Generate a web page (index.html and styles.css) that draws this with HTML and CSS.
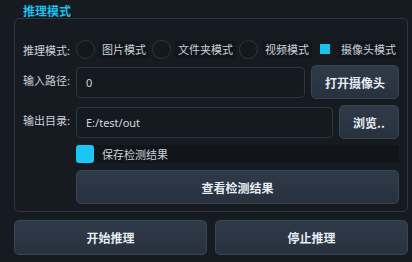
FILE: index.html
```html
<!DOCTYPE html>
<html>
<head>
    <meta charset="utf-8">
    <meta name="viewport" content="width=device-width, initial-scale=1">
    <link rel="stylesheet" href="styles.css">
    <title>推理模式</title>
</head>
<body>
<div class="panel">
    <div class="group-title">推理模式</div>
    <div class="group">
        <div class="row mode-row">
            <span class="label">推理模式:</span>
            <div class="radios">
                <span class="radio"><i class="dot"></i><span class="rtext">图片模式</span></span>
                <span class="radio"><i class="dot"></i><span class="rtext">文件夹模式</span></span>
                <span class="radio"><i class="dot"></i><span class="rtext">视频模式</span></span>
                <span class="radio checked"><i class="dot"></i><span class="rtext">摄像头模式</span></span>
            </div>
        </div>
        <div class="row">
            <span class="label">输入路径:</span>
            <div class="field">0</div>
            <button class="btn cam">打开摄像头</button>
        </div>
        <div class="row">
            <span class="label">输出目录:</span>
            <div class="field">E:/test/out</div>
            <button class="btn browse">浏览..</button>
        </div>
        <div class="row check-row">
            <span class="check"></span>
            <span class="check-text">保存检测结果</span>
        </div>
        <div class="row wide-row">
            <button class="btn wide">查看检测结果</button>
        </div>
    </div>
    <div class="actions">
        <button class="btn big">开始推理</button>
        <button class="btn big">停止推理</button>
    </div>
</div>
</body>
</html>
```

FILE: styles.css
```css
body{
    margin: 0;
    background: #161b22;
    font-family: "Noto Sans CJK SC", "Noto Sans", sans-serif;
    color: #c9d1d9;
    font-size: 11px;
}

.panel{
    width: 394px;
    padding: 3px 4px 0 14px;
}

.group-title{
    height: 15px;
    line-height: 15px;
    padding-left: 9px;
    font-size: 12px;
    font-weight: bold;
    color: #1fbfea;
}

.group{
    border: 1px solid #30363d;
    border-radius: 5px;
    padding: 21px 8px 7px 8px;
    display: flex;
    flex-direction: column;
    gap: 6px;
}

.row{
    display: flex;
    align-items: center;
    height: 34px;
    gap: 6px;
}

.label{
    width: 53px;
    margin-right: -6px;
    flex-shrink: 0;
    padding-bottom: 4px;
    white-space: nowrap;
}

.mode-row{
    height: 19px;
}
.mode-row .label{
    padding-bottom: 0;
}

.radios{
    display: flex;
    gap: 3px;
}

.radio{
    display: flex;
    align-items: center;
}

.dot{
    width: 17px;
    height: 17px;
    border: 1px solid #30363d;
    border-radius: 50%;
    background: #14181e;
    position: relative;
}

.checked .dot{
    border: none;
    border-radius: 0;
    background: transparent;
    width: 19px;
    height: 19px;
}
.checked .dot::after{
    content: "";
    position: absolute;
    left: 5px;
    top: 4px;
    width: 10px;
    height: 10px;
    background: #19c3f0;
}

.rtext{
    margin-left: 4px;
    padding: 0 3px;
    height: 17px;
    line-height: 17px;
    background: #12161c;
}

.field{
    flex: 1;
    height: 29px;
    line-height: 29px;
    border: 1px solid #30363d;
    border-radius: 4px;
    padding-left: 9px;
    background: #151a21;
    color: #d0d7de;
    font-family: "Noto Sans", "Noto Sans CJK SC", sans-serif;
    font-size: 11px;
}

.btn{
    font-family: "Noto Sans CJK SC", "Noto Sans", sans-serif;
    font-size: 12px;
    font-weight: bold;
    color: #e6edf3;
    background: linear-gradient(#2f3a49, #28313e);
    border: 1px solid #3a4556;
    border-radius: 5px;
    height: 34px;
    padding: 0;
}

.cam{
    width: 88px;
}
.browse{
    width: 60px;
}

.check-row{
    height: 18px;
    gap: 0;
    margin-top: 0;
}

.check{
    margin-left: 53px;
    width: 18px;
    height: 18px;
    border-radius: 3px;
    background: #19c6f5;
}

.check-text{
    flex: 1;
    height: 18px;
    line-height: 18px;
    padding-left: 8px;
    background: #11151a;
}

.wide-row{
    margin-top: 1px;
}

.wide{
    margin-left: 53px;
    flex: 1;
}

.actions{
    display: flex;
    gap: 8px;
    margin-top: 8px;
}

.big{
    flex: 1;
    height: 35px;
}
```
